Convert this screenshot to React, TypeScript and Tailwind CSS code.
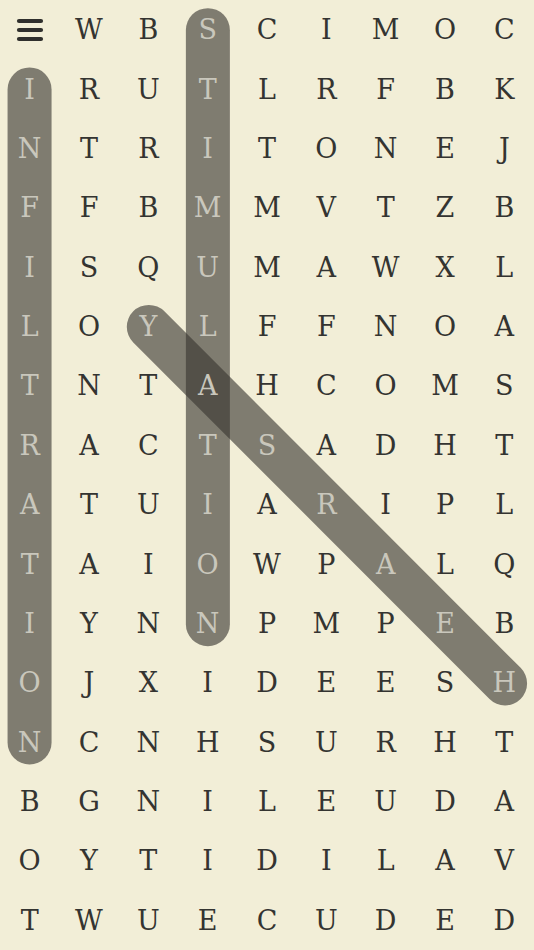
import React from "react";

const ROWS = [
  " WBSCIMOC",
  "IRUTLRFBK",
  "NTRITONEJ",
  "FFBMMVTZB",
  "ISQUMAWXL",
  "LOYLFFNOA",
  "TNTAHCOMS",
  "RACTSADHT",
  "ATUIARIPL",
  "TAIOWPALQ",
  "IYNNPMPEB",
  "OJXIDEESH",
  "NCNHSURHT",
  "BGNILEUDA",
  "OYTIDILAV",
  "TWUECUDED",
];

const CW = 534 / 9;
const CH = 950 / 16;
const R = 22;

type Seg = { r1: number; c1: number; r2: number; c2: number };
const WORDS: Seg[] = [
  { r1: 1, c1: 0, r2: 12, c2: 0 },
  { r1: 0, c1: 3, r2: 10, c2: 3 },
  { r1: 5, c1: 2, r2: 11, c2: 8 },
];

function cells(s: Seg): string[] {
  const n = Math.max(Math.abs(s.r2 - s.r1), Math.abs(s.c2 - s.c1));
  const dr = Math.sign(s.r2 - s.r1);
  const dc = Math.sign(s.c2 - s.c1);
  const out: string[] = [];
  for (let i = 0; i <= n; i++) out.push(`${s.r1 + dr * i},${s.c1 + dc * i}`);
  return out;
}

const selected = new Set(WORDS.flatMap(cells));

function Bar({ s }: { s: Seg }) {
  const x1 = (s.c1 + 0.5) * CW;
  const y1 = (s.r1 + 0.5) * CH;
  const x2 = (s.c2 + 0.5) * CW;
  const y2 = (s.r2 + 0.5) * CH;
  const len = Math.hypot(x2 - x1, y2 - y1) + 2 * R;
  const ang = (Math.atan2(y2 - y1, x2 - x1) * 180) / Math.PI;
  const cx = (x1 + x2) / 2;
  const cy = (y1 + y2) / 2;
  return (
    <div
      className="absolute rounded-full bg-[#383630]/[0.62]"
      style={{
        left: cx - len / 2,
        top: cy - R,
        width: len,
        height: 2 * R,
        transform: `rotate(${ang}deg)`,
      }}
    />
  );
}

export default function App() {
  return (
    <div className="relative w-[534px] h-[950px] overflow-hidden bg-[#f2eed7]">
      {WORDS.map((s, i) => (
        <Bar key={i} s={s} />
      ))}
      <div className="relative grid grid-cols-9 grid-rows-16 w-full h-full">
        {ROWS.flatMap((row, r) =>
          row.split("").map((ch, c) => {
            if (r === 0 && c === 0) {
              return (
                <div key={`${r}-${c}`} className="flex items-center justify-center">
                  <svg width="28" height="24" viewBox="0 0 28 24">
                    <g stroke="#2f2f2c" strokeWidth="4.2" strokeLinecap="round">
                      <line x1="3" y1="3" x2="25" y2="3" />
                      <line x1="3" y1="12" x2="25" y2="12" />
                      <line x1="3" y1="21" x2="25" y2="21" />
                    </g>
                  </svg>
                </div>
              );
            }
            const sel = selected.has(`${r},${c}`);
            return (
              <div
                key={`${r}-${c}`}
                className={
                  "flex items-center justify-center text-[27px] leading-none font-['DejaVu_Serif',serif] " +
                  (sel ? "text-[#c9c7bc]" : "text-[#343431]")
                }
              >
                {ch}
              </div>
            );
          })
        )}
      </div>
    </div>
  );
}
